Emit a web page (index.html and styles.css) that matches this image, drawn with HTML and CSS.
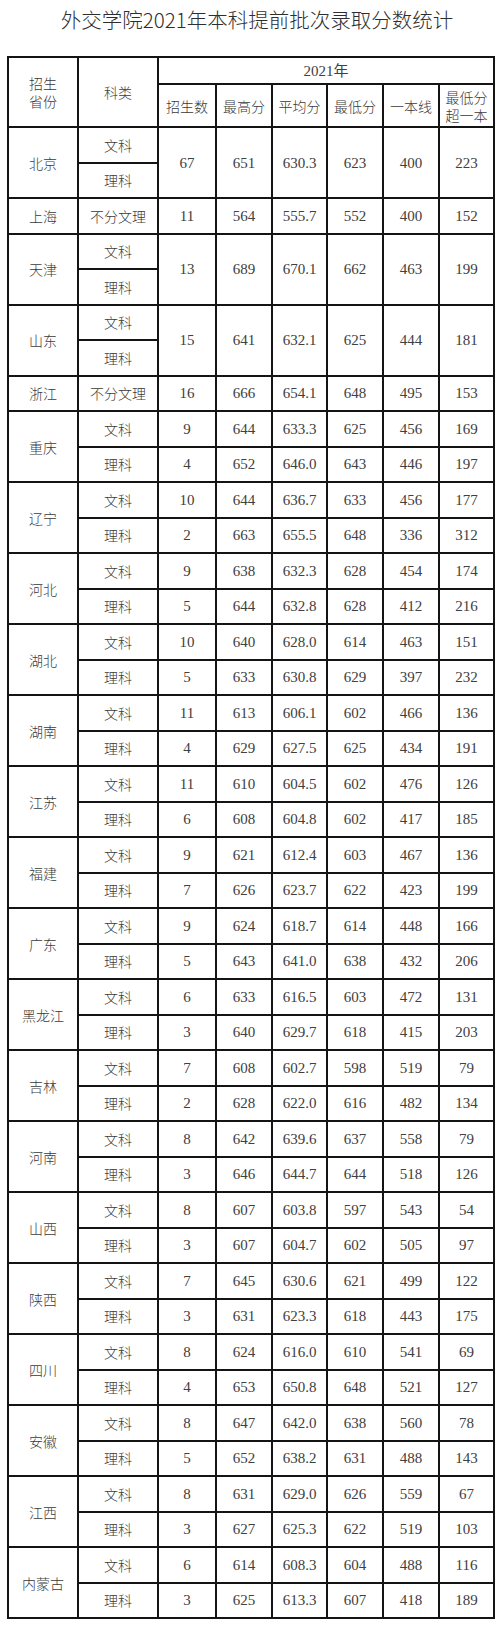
FILE: index.html
```html
<!DOCTYPE html>
<html lang="zh">
<head>
<meta charset="utf-8">
<title>外交学院2021年本科提前批次录取分数统计</title>
<link rel="stylesheet" href="styles.css">
</head>
<body>
<div class="title">外交学院2021年本科提前批次录取分数统计</div>
<table class="score">
<colgroup>
<col class="c1"><col class="c2"><col class="c3"><col class="c4"><col class="c5"><col class="c6"><col class="c7"><col class="c8">
</colgroup>
<thead>
<tr class="h1"><th rowspan="2" class="two">招生<br>省份</th><th rowspan="2">科类</th><th colspan="6" class="num">2021年</th></tr>
<tr class="h2"><th>招生数</th><th>最高分</th><th>平均分</th><th>最低分</th><th>一本线</th><th class="two">最低分<br>超一本</th></tr>
</thead>
<tbody>
<tr><td rowspan="2">北京</td><td>文科</td><td rowspan="2" class="num">67</td><td rowspan="2" class="num">651</td><td rowspan="2" class="num">630.3</td><td rowspan="2" class="num">623</td><td rowspan="2" class="num">400</td><td rowspan="2" class="num">223</td></tr>
<tr><td>理科</td></tr>
<tr><td>上海</td><td>不分文理</td><td class="num">11</td><td class="num">564</td><td class="num">555.7</td><td class="num">552</td><td class="num">400</td><td class="num">152</td></tr>
<tr><td rowspan="2">天津</td><td>文科</td><td rowspan="2" class="num">13</td><td rowspan="2" class="num">689</td><td rowspan="2" class="num">670.1</td><td rowspan="2" class="num">662</td><td rowspan="2" class="num">463</td><td rowspan="2" class="num">199</td></tr>
<tr><td>理科</td></tr>
<tr><td rowspan="2">山东</td><td>文科</td><td rowspan="2" class="num">15</td><td rowspan="2" class="num">641</td><td rowspan="2" class="num">632.1</td><td rowspan="2" class="num">625</td><td rowspan="2" class="num">444</td><td rowspan="2" class="num">181</td></tr>
<tr><td>理科</td></tr>
<tr><td>浙江</td><td>不分文理</td><td class="num">16</td><td class="num">666</td><td class="num">654.1</td><td class="num">648</td><td class="num">495</td><td class="num">153</td></tr>
<tr><td rowspan="2">重庆</td><td>文科</td><td class="num">9</td><td class="num">644</td><td class="num">633.3</td><td class="num">625</td><td class="num">456</td><td class="num">169</td></tr>
<tr><td>理科</td><td class="num">4</td><td class="num">652</td><td class="num">646.0</td><td class="num">643</td><td class="num">446</td><td class="num">197</td></tr>
<tr><td rowspan="2">辽宁</td><td>文科</td><td class="num">10</td><td class="num">644</td><td class="num">636.7</td><td class="num">633</td><td class="num">456</td><td class="num">177</td></tr>
<tr><td>理科</td><td class="num">2</td><td class="num">663</td><td class="num">655.5</td><td class="num">648</td><td class="num">336</td><td class="num">312</td></tr>
<tr><td rowspan="2">河北</td><td>文科</td><td class="num">9</td><td class="num">638</td><td class="num">632.3</td><td class="num">628</td><td class="num">454</td><td class="num">174</td></tr>
<tr><td>理科</td><td class="num">5</td><td class="num">644</td><td class="num">632.8</td><td class="num">628</td><td class="num">412</td><td class="num">216</td></tr>
<tr><td rowspan="2">湖北</td><td>文科</td><td class="num">10</td><td class="num">640</td><td class="num">628.0</td><td class="num">614</td><td class="num">463</td><td class="num">151</td></tr>
<tr><td>理科</td><td class="num">5</td><td class="num">633</td><td class="num">630.8</td><td class="num">629</td><td class="num">397</td><td class="num">232</td></tr>
<tr><td rowspan="2">湖南</td><td>文科</td><td class="num">11</td><td class="num">613</td><td class="num">606.1</td><td class="num">602</td><td class="num">466</td><td class="num">136</td></tr>
<tr><td>理科</td><td class="num">4</td><td class="num">629</td><td class="num">627.5</td><td class="num">625</td><td class="num">434</td><td class="num">191</td></tr>
<tr><td rowspan="2">江苏</td><td>文科</td><td class="num">11</td><td class="num">610</td><td class="num">604.5</td><td class="num">602</td><td class="num">476</td><td class="num">126</td></tr>
<tr><td>理科</td><td class="num">6</td><td class="num">608</td><td class="num">604.8</td><td class="num">602</td><td class="num">417</td><td class="num">185</td></tr>
<tr><td rowspan="2">福建</td><td>文科</td><td class="num">9</td><td class="num">621</td><td class="num">612.4</td><td class="num">603</td><td class="num">467</td><td class="num">136</td></tr>
<tr><td>理科</td><td class="num">7</td><td class="num">626</td><td class="num">623.7</td><td class="num">622</td><td class="num">423</td><td class="num">199</td></tr>
<tr><td rowspan="2">广东</td><td>文科</td><td class="num">9</td><td class="num">624</td><td class="num">618.7</td><td class="num">614</td><td class="num">448</td><td class="num">166</td></tr>
<tr><td>理科</td><td class="num">5</td><td class="num">643</td><td class="num">641.0</td><td class="num">638</td><td class="num">432</td><td class="num">206</td></tr>
<tr><td rowspan="2">黑龙江</td><td>文科</td><td class="num">6</td><td class="num">633</td><td class="num">616.5</td><td class="num">603</td><td class="num">472</td><td class="num">131</td></tr>
<tr><td>理科</td><td class="num">3</td><td class="num">640</td><td class="num">629.7</td><td class="num">618</td><td class="num">415</td><td class="num">203</td></tr>
<tr><td rowspan="2">吉林</td><td>文科</td><td class="num">7</td><td class="num">608</td><td class="num">602.7</td><td class="num">598</td><td class="num">519</td><td class="num">79</td></tr>
<tr><td>理科</td><td class="num">2</td><td class="num">628</td><td class="num">622.0</td><td class="num">616</td><td class="num">482</td><td class="num">134</td></tr>
<tr><td rowspan="2">河南</td><td>文科</td><td class="num">8</td><td class="num">642</td><td class="num">639.6</td><td class="num">637</td><td class="num">558</td><td class="num">79</td></tr>
<tr><td>理科</td><td class="num">3</td><td class="num">646</td><td class="num">644.7</td><td class="num">644</td><td class="num">518</td><td class="num">126</td></tr>
<tr><td rowspan="2">山西</td><td>文科</td><td class="num">8</td><td class="num">607</td><td class="num">603.8</td><td class="num">597</td><td class="num">543</td><td class="num">54</td></tr>
<tr><td>理科</td><td class="num">3</td><td class="num">607</td><td class="num">604.7</td><td class="num">602</td><td class="num">505</td><td class="num">97</td></tr>
<tr><td rowspan="2">陕西</td><td>文科</td><td class="num">7</td><td class="num">645</td><td class="num">630.6</td><td class="num">621</td><td class="num">499</td><td class="num">122</td></tr>
<tr><td>理科</td><td class="num">3</td><td class="num">631</td><td class="num">623.3</td><td class="num">618</td><td class="num">443</td><td class="num">175</td></tr>
<tr><td rowspan="2">四川</td><td>文科</td><td class="num">8</td><td class="num">624</td><td class="num">616.0</td><td class="num">610</td><td class="num">541</td><td class="num">69</td></tr>
<tr><td>理科</td><td class="num">4</td><td class="num">653</td><td class="num">650.8</td><td class="num">648</td><td class="num">521</td><td class="num">127</td></tr>
<tr><td rowspan="2">安徽</td><td>文科</td><td class="num">8</td><td class="num">647</td><td class="num">642.0</td><td class="num">638</td><td class="num">560</td><td class="num">78</td></tr>
<tr><td>理科</td><td class="num">5</td><td class="num">652</td><td class="num">638.2</td><td class="num">631</td><td class="num">488</td><td class="num">143</td></tr>
<tr><td rowspan="2">江西</td><td>文科</td><td class="num">8</td><td class="num">631</td><td class="num">629.0</td><td class="num">626</td><td class="num">559</td><td class="num">67</td></tr>
<tr><td>理科</td><td class="num">3</td><td class="num">627</td><td class="num">625.3</td><td class="num">622</td><td class="num">519</td><td class="num">103</td></tr>
<tr><td rowspan="2">内蒙古</td><td>文科</td><td class="num">6</td><td class="num">614</td><td class="num">608.3</td><td class="num">604</td><td class="num">488</td><td class="num">116</td></tr>
<tr><td>理科</td><td class="num">3</td><td class="num">625</td><td class="num">613.3</td><td class="num">607</td><td class="num">418</td><td class="num">189</td></tr>
</tbody>
</table>
</body>
</html>
```
FILE: styles.css
```css
html, body {
  margin: 0;
  padding: 0;
  background: #ffffff;
}
body {
  width: 500px;
  font-family: "Liberation Serif", "Noto Sans CJK SC", serif;
  color: #3a3a3a;
}
.title {
  box-sizing: border-box;
  height: 56px;
  padding: 7px 0 0 14px;
  text-align: center;
  font-family: "Noto Sans CJK SC", sans-serif;
  font-size: 20.5px;
  line-height: 24px;
  font-weight: 300;
  color: #2e2e2e;
}
.score {
  margin-left: 7px;
  table-layout: fixed;
  width: 488px;
  border-collapse: separate;
  border-spacing: 0;
  border-top: 2px solid #141414;
  border-left: 2px solid #141414;
}
.c1 { width: 70px; }
.c2 { width: 80px; }
.c3 { width: 58px; }
.c4 { width: 56px; }
.c5 { width: 55px; }
.c6 { width: 56px; }
.c7 { width: 56px; }
.c8 { width: 55px; }
.score th,
.score td {
  box-sizing: border-box;
  padding: 0;
  border-right: 2px solid #141414;
  border-bottom: 2px solid #141414;
  text-align: center;
  vertical-align: middle;
  font-family: "Noto Sans CJK SC", sans-serif;
  font-weight: 300;
  font-size: 14px;
  line-height: 18px;
  color: #3a3a3a;
  white-space: nowrap;
}
.score .num {
  font-family: "Liberation Serif", serif;
  font-weight: 400;
  font-size: 15px;
  color: #404040;
}
.score th.num {
  font-family: "Liberation Serif", "Noto Sans CJK SC", serif;
}
.score .two {
  line-height: 18px;
}
.h1 { height: 27px; }
.h2 { height: 43px; }
.score tbody tr { height: 35.5px; }
```
